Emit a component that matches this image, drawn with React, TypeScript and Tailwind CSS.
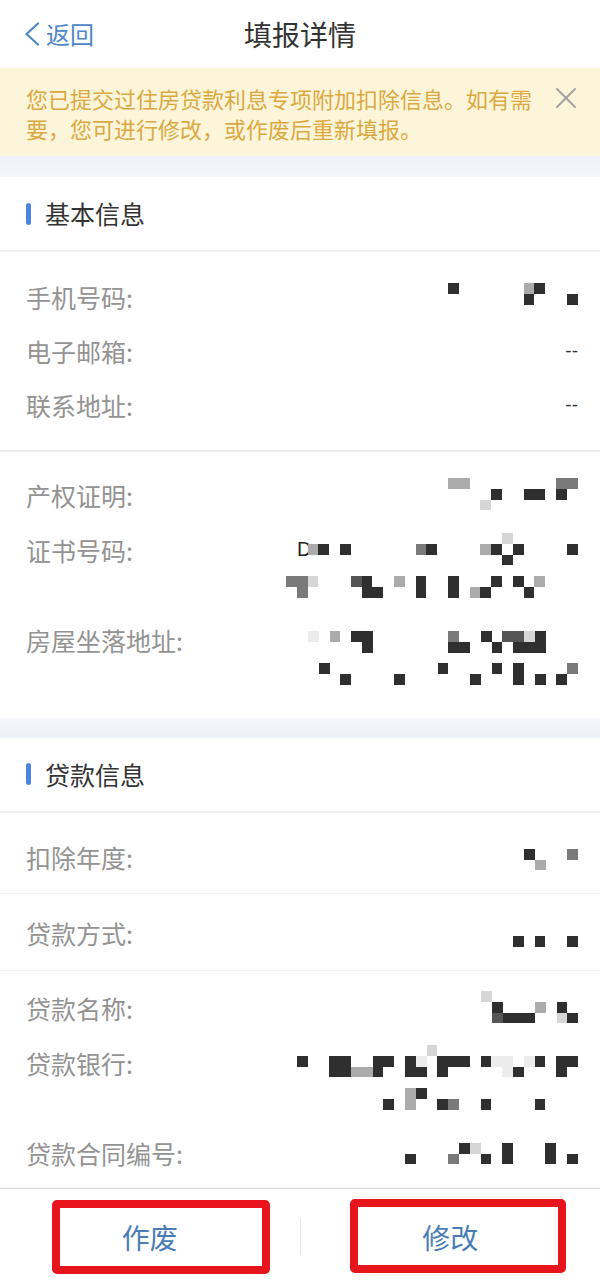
import type { ReactNode } from "react";

// one mosaic cell of the redacted values, in px
const C = 10.8;

type Shade = "d" | "dm" | "m" | "l" | "x" | "xx";
type Cell = [number, number, Shade]; // column counted from the right, row, shade

const SHADES: Record<Shade, string> = {
  d: "#2f2f2f",
  dm: "#555555",
  m: "#7a7a7a",
  l: "#ababab",
  x: "#d6d6d6",
  xx: "#ececec",
};

function Mosaic({ cols, rows, cells, children }: { cols: number; rows: number; cells: Cell[]; children?: ReactNode }) {
  return (
    <svg width={cols * C} height={rows * C} className="block shrink-0" shapeRendering="crispEdges">
      {children}
      {cells.map(([c, r, s], i) => (
        <rect key={i} x={(cols - 1 - c) * C} y={r * C} width={C} height={C} fill={SHADES[s]} />
      ))}
    </svg>
  );
}

function Row({ label, className = "", children }: { label: string; className?: string; children?: ReactNode }) {
  return (
    <div className={`flex items-start justify-between pl-[26px] pr-[22px] ${className}`}>
      <span className="text-[25px] leading-[34px] text-[#939393] whitespace-nowrap">{label}</span>
      {children}
    </div>
  );
}

function Dash() {
  return <span className="text-[19px] leading-[34px] text-[#333] font-['Liberation_Sans',sans-serif]">--</span>;
}

function SectionTitle({ title }: { title: string }) {
  return (
    <div className="h-[75px] flex items-center pl-[26px] bg-white border-b-2 border-[#eeeeee]">
      <div className="w-[5px] h-[22px] rounded-full bg-[#4a86dc] mr-[14px]" />
      <span className="text-[25px] text-[#333]">{title}</span>
    </div>
  );
}

const phone: Cell[] = [[11, 0, "d"], [4, 0, "l"], [3, 0, "d"], [4, 1, "d"], [0, 1, "d"]];

const property: Cell[] = [
  [11, 0, "l"], [10, 0, "l"], [1, 0, "m"], [0, 0, "m"],
  [7, 1, "d"], [4, 1, "d"], [3, 1, "d"], [1, 1, "d"],
  [8, 2, "x"],
];

const certificate: Cell[] = [
  [6, 0, "x"],
  [24, 1, "l"], [23, 1, "d"], [21, 1, "d"], [14, 1, "m"], [13, 1, "d"], [8, 1, "l"], [7, 1, "d"], [5, 1, "d"], [0, 1, "d"],
  [6, 2, "d"],
  [26, 4, "m"], [25, 4, "m"], [24, 4, "x"], [20, 4, "dm"], [19, 4, "d"], [16, 4, "l"], [14, 4, "d"], [11, 4, "d"], [7, 4, "d"], [5, 4, "d"], [3, 4, "l"],
  [25, 5, "m"], [19, 5, "d"], [18, 5, "d"], [14, 5, "d"], [11, 5, "d"], [9, 5, "l"], [8, 5, "d"], [4, 5, "d"],
];

const address: Cell[] = [
  [24, 0, "xx"], [22, 0, "l"], [20, 0, "d"], [19, 0, "d"], [11, 0, "m"], [8, 0, "d"], [6, 0, "dm"], [5, 0, "dm"], [4, 0, "x"], [3, 0, "d"],
  [19, 1, "d"], [11, 1, "d"], [10, 1, "d"], [7, 1, "d"], [5, 1, "d"], [4, 1, "d"], [3, 1, "d"],
  [23, 3, "d"], [12, 3, "d"], [7, 3, "d"], [5, 3, "d"], [0, 3, "m"],
  [21, 4, "d"], [16, 4, "d"], [9, 4, "d"], [5, 4, "d"], [3, 4, "d"], [1, 4, "d"],
];

const year: Cell[] = [[4, 0, "d"], [0, 0, "m"], [3, 1, "l"]];
const loanType: Cell[] = [[5, 0, "d"], [3, 0, "d"], [0, 0, "d"]];

const loanName: Cell[] = [
  [8, 0, "x"],
  [7, 1, "d"], [3, 1, "l"], [1, 1, "d"],
  [7, 2, "dm"], [6, 2, "d"], [5, 2, "d"], [4, 2, "d"], [1, 2, "x"], [0, 2, "d"],
];

const bank: Cell[] = [
  [13, 0, "x"],
  [25, 1, "d"], [22, 1, "d"], [21, 1, "d"], [18, 1, "d"], [17, 1, "d"], [15, 1, "d"], [14, 1, "xx"], [12, 1, "d"], [11, 1, "d"], [10, 1, "d"], [8, 1, "d"], [7, 1, "xx"], [6, 1, "xx"], [4, 1, "xx"], [3, 1, "d"], [1, 1, "d"], [0, 1, "d"],
  [22, 2, "d"], [21, 2, "d"], [20, 2, "l"], [19, 2, "l"], [18, 2, "d"], [15, 2, "d"], [14, 2, "d"], [12, 2, "d"], [6, 2, "xx"], [5, 2, "d"], [1, 2, "d"],
  [15, 4, "l"], [14, 4, "d"],
  [17, 5, "d"], [15, 5, "l"], [12, 5, "d"], [11, 5, "m"], [8, 5, "d"], [3, 5, "d"],
];

const contract: Cell[] = [
  [10, 0, "d"], [9, 0, "x"], [6, 0, "d"], [2, 0, "d"],
  [15, 1, "d"], [11, 1, "m"], [8, 1, "d"], [6, 1, "d"], [2, 1, "d"], [0, 1, "d"],
];

export default function App() {
  return (
    <div className="w-[600px] h-[1284px] flex flex-col bg-white overflow-hidden font-['Noto_Sans_CJK_SC','Noto_Sans',sans-serif]">
      <div className="flex-1 min-h-0 overflow-hidden">
        {/* Nav bar */}
        <div className="h-[68px] grid grid-cols-[1fr_auto_1fr] items-center bg-white">
          <div className="flex items-center pl-[24px] text-[#4d87c7]">
            <svg width="16" height="24" viewBox="0 0 16 24" className="mr-[6px]">
              <polyline points="14,1.5 2.5,12 14,22.5" fill="none" stroke="#4d87c7" strokeWidth="2.2" strokeLinecap="round" strokeLinejoin="round" />
            </svg>
            <span className="text-[24px] leading-none">返回</span>
          </div>
          <span className="text-[28px] text-[#333] leading-none">填报详情</span>
          <div />
        </div>

        {/* Notice */}
        <div className="h-[88px] flex items-start bg-[#fdf5da] pl-[26px] pr-[23px] pt-[15px]">
          <p className="w-[510px] text-[22px] leading-[30px] text-[#dba93f]">
            您已提交过住房贷款利息专项附加扣除信息。如有需要，您可进行修改，或作废后重新填报。
          </p>
          <svg width="22" height="22" viewBox="0 0 22 22" className="ml-auto mt-[4px]">
            <path d="M2 2 L20 20 M20 2 L2 20" stroke="#a3a3a3" strokeWidth="2" strokeLinecap="round" />
          </svg>
        </div>
        <div className="h-[21px] bg-gradient-to-b from-[#edf2f8] to-[#f4f7fb]" />

        {/* 基本信息 */}
        <SectionTitle title="基本信息" />
        <div className="flex flex-col gap-[20px] py-[28px]">
          <Row label="手机号码:">
            <div className="mt-[3px]">
              <Mosaic cols={12} rows={2} cells={phone} />
            </div>
          </Row>
          <Row label="电子邮箱:">
            <Dash />
          </Row>
          <Row label="联系地址:">
            <Dash />
          </Row>
        </div>
        <div className="h-[2px] bg-[#ebebeb]" />
        <div className="flex flex-col pt-[26px] pb-[33px]">
          <Row label="产权证明:">
            <Mosaic cols={12} rows={3} cells={property} />
          </Row>
          <Row label="证书号码:" className="mt-[21px]">
            <Mosaic cols={27} rows={6} cells={certificate}>
              <text x={11} y={23} fontSize={20} fill="#1f1f1f" fontFamily="Liberation Sans, sans-serif">
                D
              </text>
            </Mosaic>
          </Row>
          <Row label="房屋坐落地址:" className="mt-[25px]">
            <div className="mt-[8px]">
              <Mosaic cols={25} rows={5} cells={address} />
            </div>
          </Row>
        </div>
        <div className="h-[20px] bg-gradient-to-b from-[#f4f7fb] to-[#edf2f8]" />

        {/* 贷款信息 */}
        <SectionTitle title="贷款信息" />
        <Row label="扣除年度:" className="pt-[27px] pb-[19px] border-b border-[#f0f0f0]">
          <div className="mt-[9px]">
            <Mosaic cols={5} rows={2} cells={year} />
          </div>
        </Row>
        <Row label="贷款方式:" className="pt-[22px] pb-[20px] border-b border-[#f0f0f0]">
          <div className="mt-[20px]">
            <Mosaic cols={6} rows={1} cells={loanType} />
          </div>
        </Row>
        <Row label="贷款名称:" className="pt-[20px]">
          <Mosaic cols={9} rows={3} cells={loanName} />
        </Row>
        <Row label="贷款银行:" className="mt-[21px]">
          <div className="-mt-[1px]">
            <Mosaic cols={26} rows={6} cells={bank} />
          </div>
        </Row>
        <Row label="贷款合同编号:" className="mt-[26px] pb-[40px]">
          <div className="mt-[7px]">
            <Mosaic cols={16} rows={2} cells={contract} />
          </div>
        </Row>
      </div>

      {/* Bottom actions */}
      <div className="relative h-[96px] shrink-0 flex items-center bg-white border-t border-[#d8d8d8] shadow-[0_-2px_4px_rgba(0,0,0,0.04)]">
        <button className="flex-1 h-full flex items-center justify-center text-[28px] text-[#4a7db8]">作废</button>
        <div className="w-px h-[37px] bg-[#e3e3e3]" />
        <button className="flex-1 h-full flex items-center justify-center text-[28px] text-[#4a7db8]">修改</button>
        <div className="absolute left-[52px] top-[11px] w-[218px] h-[74px] border-[8px] border-[#e8141c] rounded-[5px] pointer-events-none" />
        <div className="absolute left-[350px] top-[10px] w-[216px] h-[74px] border-[8px] border-[#e8141c] rounded-[5px] pointer-events-none" />
      </div>
    </div>
  );
}
